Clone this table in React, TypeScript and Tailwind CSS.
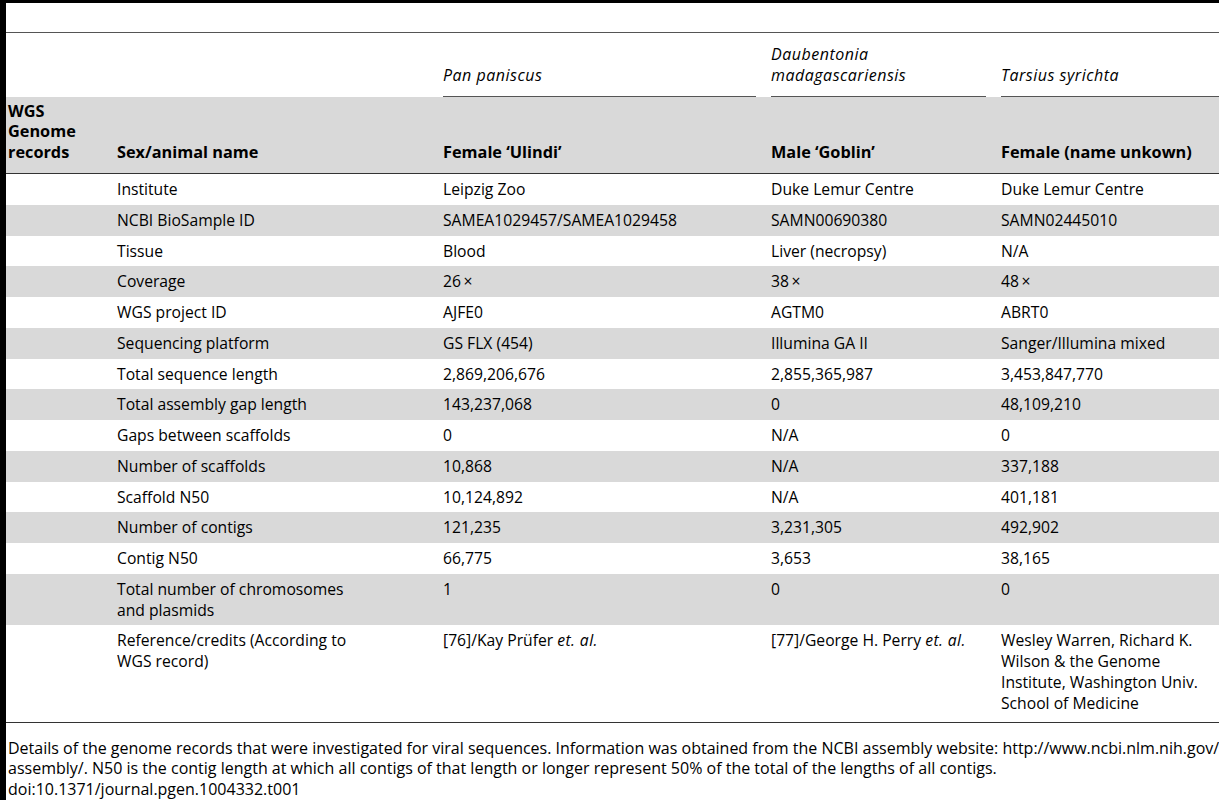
const cols = "grid grid-cols-[111px_326px_328px_230px_1fr]";

type Row = { label: React.ReactNode; a: React.ReactNode; b: React.ReactNode; c: React.ReactNode; last?: boolean };

const rows: Row[] = [
  { label: "Institute", a: "Leipzig Zoo", b: "Duke Lemur Centre", c: "Duke Lemur Centre" },
  { label: "NCBI BioSample ID", a: "SAMEA1029457/SAMEA1029458", b: "SAMN00690380", c: "SAMN02445010" },
  { label: "Tissue", a: "Blood", b: "Liver (necropsy)", c: "N/A" },
  { label: "Coverage", a: "26\u2009×", b: "38\u2009×", c: "48\u2009×" },
  { label: "WGS project ID", a: "AJFE0", b: "AGTM0", c: "ABRT0" },
  { label: "Sequencing platform", a: "GS FLX (454)", b: "Illumina GA II", c: "Sanger/Illumina mixed" },
  { label: "Total sequence length", a: "2,869,206,676", b: "2,855,365,987", c: "3,453,847,770" },
  { label: "Total assembly gap length", a: "143,237,068", b: "0", c: "48,109,210" },
  { label: "Gaps between scaffolds", a: "0", b: "N/A", c: "0" },
  { label: "Number of scaffolds", a: "10,868", b: "N/A", c: "337,188" },
  { label: "Scaffold N50", a: "10,124,892", b: "N/A", c: "401,181" },
  { label: "Number of contigs", a: "121,235", b: "3,231,305", c: "492,902" },
  { label: "Contig N50", a: "66,775", b: "3,653", c: "38,165" },
  {
    label: (
      <>
        Total number of chromosomes
        <br />
        and plasmids
      </>
    ),
    a: "1",
    b: "0",
    c: "0",
  },
  {
    label: (
      <>
        Reference/credits (According to
        <br />
        WGS record)
      </>
    ),
    a: (
      <>
        [76]/Kay Prüfer <i className="tracking-[0.4px]">et. al.</i>
      </>
    ),
    b: (
      <>
        [77]/George H. Perry <i className="tracking-[0.4px]">et. al.</i>
      </>
    ),
    c: (
      <>
        Wesley Warren, Richard K.
        <br />
        Wilson &amp; the Genome
        <br />
        Institute, Washington Univ.
        <br />
        School of Medicine
      </>
    ),
    last: true,
  },
];

export default function App() {
  return (
    <div className="min-h-[800px] border-l-[6px] border-t-[3px] border-black bg-white font-['Open_Sans',sans-serif] text-[15.7px] leading-[20.77px] text-black">
      <div className="h-[30px] border-b border-[#555]" />

      {/* species header */}
      <div className={`${cols} h-[64px] items-end text-[16px] italic tracking-[0.5px]`}>
        <div />
        <div />
        <div className="mr-[15px] border-b border-[#555] pb-[10px]">Pan paniscus</div>
        <div className="mr-[15px] border-b border-[#555] pb-[10px]">
          Daubentonia
          <br />
          madagascariensis
        </div>
        <div className="border-b border-[#555] pb-[10px]">Tarsius syrichta</div>
      </div>

      {/* column header */}
      <div
        className={`${cols} h-[77px] items-end border-b border-[#333] bg-[#d9d9d9] pb-[10px] text-[16.3px] font-bold`}
      >
        <div className="pl-[2px]">
          WGS
          <br />
          Genome
          <br />
          records
        </div>
        <div>Sex/animal name</div>
        <div>Female ‘Ulindi’</div>
        <div>Male ‘Goblin’</div>
        <div>Female (name unkown)</div>
      </div>

      {rows.map((r, i) => (
        <div
          key={i}
          className={`${cols} pt-[5px] ${r.last ? "pb-[8px]" : "pb-[5px]"} ${i % 2 === 1 ? "bg-[#d9d9d9]" : ""} ${
            r.last ? "border-b border-[#333]" : ""
          }`}
        >
          <div />
          <div>{r.label}</div>
          <div>{r.a}</div>
          <div>{r.b}</div>
          <div>{r.c}</div>
        </div>
      ))}

      <div className="whitespace-nowrap pl-[2px] pt-[15px] text-[16px] leading-[20.5px]">
        <div>
          Details of the genome records that were investigated for viral sequences. Information was obtained from the
          NCBI assembly website: http://www.ncbi.nlm.nih.gov/
        </div>
        <div>
          assembly/. N50 is the contig length at which all contigs of that length or longer represent 50% of the total of
          the lengths of all contigs.
        </div>
        <div>doi:10.1371/journal.pgen.1004332.t001</div>
      </div>
    </div>
  );
}
